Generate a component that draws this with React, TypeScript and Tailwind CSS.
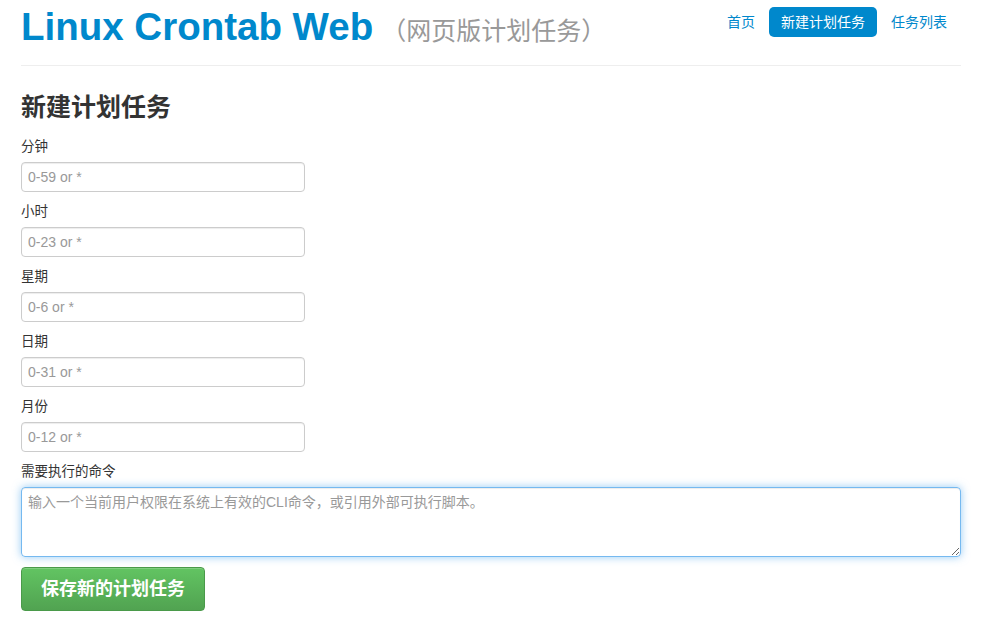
import React from "react";

const fields = [
  { label: "分钟", placeholder: "0-59 or *" },
  { label: "小时", placeholder: "0-23 or *" },
  { label: "星期", placeholder: "0-6 or *" },
  { label: "日期", placeholder: "0-31 or *" },
  { label: "月份", placeholder: "0-12 or *" },
];

const font = {
  fontFamily: '"Liberation Sans", "Noto Sans CJK SC", sans-serif',
};

const App = () => {
  return (
    <div className="min-h-[625px] bg-white text-[#333]" style={font}>
      <div className="w-[940px] ml-[21px]">
        <div className="flex justify-between items-start h-[66px] border-b border-[#eee]">
          <div className="flex items-baseline pt-[3px]">
            <h1 className="text-[38.5px] leading-[48px] font-bold text-[#0088cc]">
              Linux Crontab Web
            </h1>
            <span className="ml-[8px] text-[25px] text-[#999]">
              （网页版计划任务）
            </span>
          </div>
          <ul className="flex items-center text-[14px] pt-[7px]">
            <li className="px-[14px] leading-[30px] text-[#0088cc]">首页</li>
            <li className="px-[12px] leading-[30px] bg-[#0088cc] text-white rounded-[5px]">
              新建计划任务
            </li>
            <li className="px-[14px] leading-[30px] text-[#0088cc]">任务列表</li>
          </ul>
        </div>

        <h2 className="text-[25px] leading-[30px] font-bold mt-[26px] mb-[15px]">
          新建计划任务
        </h2>

        <form className="flex flex-col">
          {fields.map((f) => (
            <div key={f.label} className="flex flex-col mb-[10px]">
              <label className="text-[13.5px] leading-[20px] mb-[5px]">
                {f.label}
              </label>
              <input
                type="text"
                placeholder={f.placeholder}
                className="w-[284px] h-[30px] px-[6px] border border-[#ccc] rounded-[4px] text-[14px] placeholder:text-[#999] shadow-[inset_0_1px_1px_rgba(0,0,0,0.075)] outline-none"
              />
            </div>
          ))}
          <label className="text-[13.5px] leading-[20px] mb-[5px]">
            需要执行的命令
          </label>
          <textarea
            placeholder="输入一个当前用户权限在系统上有效的CLI命令，或引用外部可执行脚本。"
            className="w-[940px] h-[70px] px-[6px] py-[4px] border border-[rgba(82,168,236,0.8)] rounded-[4px] text-[14px] leading-[20px] placeholder:text-[#999] shadow-[inset_0_1px_1px_rgba(0,0,0,0.075),0_0_8px_rgba(82,168,236,0.6)] outline-none"
          />
          <div className="mt-[10px]">
            <button
              type="button"
              className="w-[184px] h-[44px] rounded-[4px] text-white text-[18px] font-bold border border-[#4a9a4a] bg-gradient-to-b from-[#62c462] to-[#51a351] shadow-[inset_0_1px_0_rgba(255,255,255,0.2)]"
            >
              保存新的计划任务
            </button>
          </div>
        </form>
      </div>
    </div>
  );
};

export default App;
